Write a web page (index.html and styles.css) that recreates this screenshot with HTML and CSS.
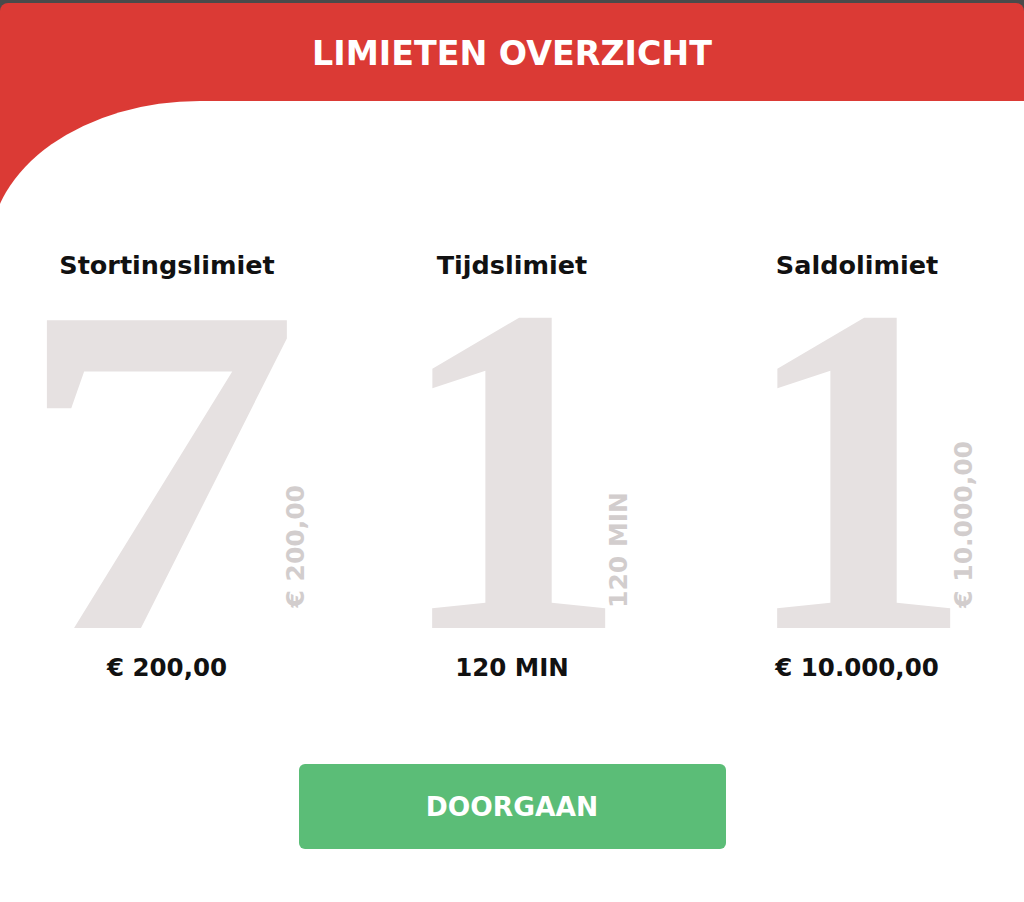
FILE: index.html
```html
<!DOCTYPE html>
<html lang="nl">
<head>
<meta charset="utf-8">
<title>Limieten overzicht</title>
<link rel="stylesheet" href="styles.css">
</head>
<body>
<div class="card">
  <header class="card-head">
    <h1 class="card-title">LIMIETEN OVERZICHT</h1>
  </header>
  <main class="card-body">
    <div class="limits">
      <section class="limit">
        <h2 class="limit-name">Stortingslimiet</h2>
        <div class="figure">
          <span class="digit digit-seven">7</span>
          <span class="side side-seven">€ 200,00</span>
        </div>
        <p class="value">€ 200,00</p>
      </section>
      <section class="limit">
        <h2 class="limit-name">Tijdslimiet</h2>
        <div class="figure">
          <span class="digit">1</span>
          <span class="side">120 MIN</span>
        </div>
        <p class="value">120 MIN</p>
      </section>
      <section class="limit">
        <h2 class="limit-name">Saldolimiet</h2>
        <div class="figure">
          <span class="digit">1</span>
          <span class="side">€ 10.000,00</span>
        </div>
        <p class="value">€ 10.000,00</p>
      </section>
    </div>
    <div class="actions">
      <button class="cta" type="button">DOORGAAN</button>
    </div>
  </main>
</div>
</body>
</html>
```
FILE: styles.css
```css
html, body {
  margin: 0;
  padding: 0;
}
body {
  background: #4a4a4a;
  font-family: "DejaVu Sans", "Noto Sans", sans-serif;
  color: #111;
  overflow: hidden;
}
.card {
  margin-top: 3px;
  min-height: 899px;
  background: #db3a35;
  border-radius: 8px 8px 0 0;
  overflow: hidden;
  display: flex;
  flex-direction: column;
}
.card-head {
  height: 98px;
  display: flex;
  align-items: center;
  justify-content: center;
}
.card-title {
  margin: 0;
  color: #fff;
  font-size: 33.3px;
  font-weight: 700;
  line-height: 40px;
  padding-top: 4px;
}
.card-body {
  flex: 1;
  background: #fff;
  margin-left: -10px;
  padding-left: 10px;
  padding-top: 149px;
  border-top-left-radius: 210px 148px;
}
.limits {
  display: grid;
  grid-template-columns: repeat(3, 345px);
  justify-content: center;
}
.limit {
  display: flex;
  flex-direction: column;
  align-items: center;
}
.limit-name {
  margin: 0;
  font-size: 25.5px;
  line-height: 30px;
  font-weight: 700;
}
.figure {
  position: relative;
  align-self: stretch;
  margin-top: 25px;
  display: flex;
  justify-content: center;
}
.digit {
  font-family: "Liberation Serif", "DejaVu Serif", serif;
  font-weight: 700;
  font-size: 470px;
  line-height: 0.7;
  color: #e6e1e1;
}
.digit-seven {
  transform: translateX(-10px) scaleX(1.22);
}
.side {
  position: absolute;
  left: calc(50% + 94px);
  bottom: 26px;
  writing-mode: vertical-rl;
  transform: rotate(180deg);
  font-size: 25px;
  font-weight: 700;
  line-height: 26px;
  color: #d2cdcd;
  white-space: nowrap;
}
.side-seven {
  left: calc(50% + 116px);
}
.value {
  margin: 19px 0 0;
  font-size: 24.5px;
  line-height: 30px;
  font-weight: 700;
}
.actions {
  display: flex;
  justify-content: center;
  margin-top: 81px;
}
.cta {
  width: 427px;
  height: 85px;
  border: 0;
  border-radius: 6px;
  background: #5bbd77;
  color: #fff;
  font-family: "DejaVu Sans", "Noto Sans", sans-serif;
  font-weight: 700;
  font-size: 26.5px;
  cursor: pointer;
}
```
